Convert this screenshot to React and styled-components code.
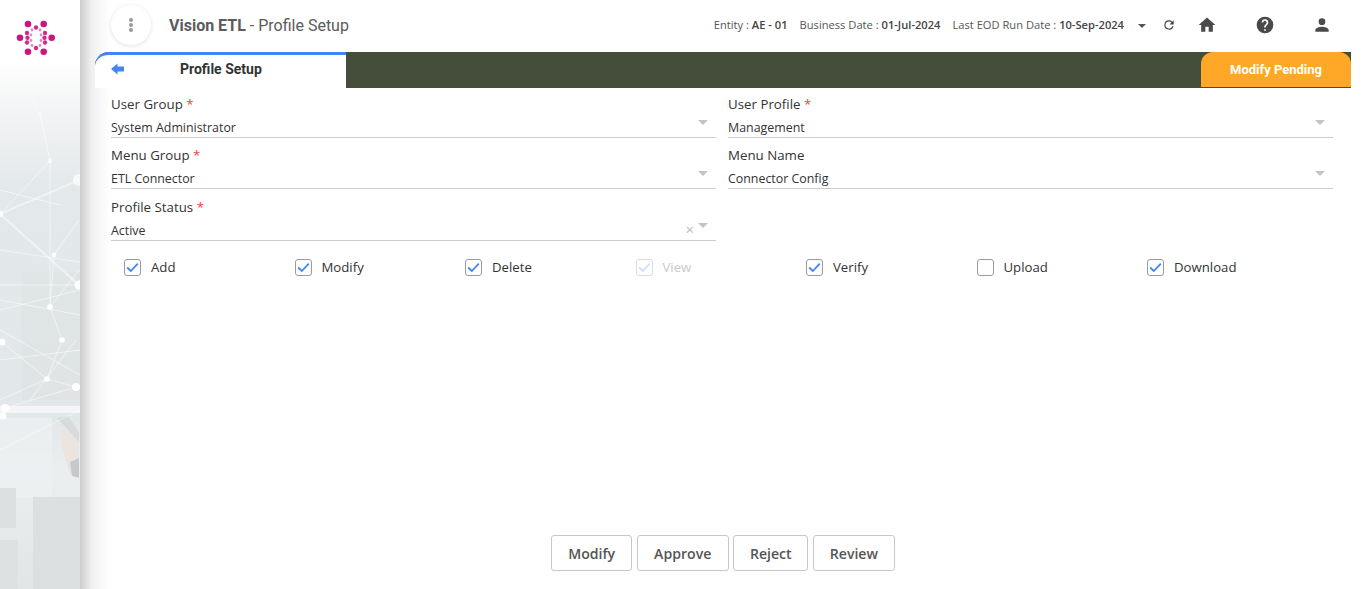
import React from "react";
import styled, { createGlobalStyle } from "styled-components";

const Global = createGlobalStyle`
  html, body { margin: 0; padding: 0; height: 100%; background: #fff; overflow: hidden; }
  #root { height: 589px; }
  * { box-sizing: border-box; }
`;
const Page = styled.div`display: flex; width: 1366px; height: 589px; font-family: "Open Sans", sans-serif; color: #333; background: #fff;`;
const Sidebar = styled.aside`
  position: relative; flex: 0 0 80px; height: 100%; overflow: visible;
  background: linear-gradient(180deg, #fff 0, #fff 60px, #f3f4f5 110px, #e3e8ea 190px, #e2e7e9 420px, #eceff0 470px, #e2e5e6 589px);
  &::after { content: ""; position: absolute; top: 0; bottom: 0; left: 80px; width: 30px; background: linear-gradient(90deg, rgba(0,0,0,.2), rgba(0,0,0,.06) 40%, rgba(0,0,0,0)); }
`;
const SideArt = styled.svg`display: block; width: 80px; height: 589px;`;
const Main = styled.main`position: relative; z-index: 1; flex: 1; min-width: 0; display: flex; flex-direction: column; padding: 0 15px; height: 100%;`;
const Header = styled.header`height: 52px; display: flex; align-items: center; padding-left: 16px;`;
const Kebab = styled.div`width: 40px; height: 40px; margin-top: -2px; border-radius: 50%; background: #fff; box-shadow: 0 1px 4px rgba(0,0,0,.12); display: flex; flex-direction: column; align-items: center; justify-content: center; gap: 1px; margin-right: 18px;`;
const Dot = styled.i`width: 4px; height: 4px; border-radius: 50%; background: #999;`;
const Title = styled.div`font-family: Roboto, sans-serif; font-size: 16px; color: #5b5b5b; margin-top: -2px; b { font-weight: 700; }`;
const Info = styled.div`margin-left: auto; display: flex; align-items: center; font-size: 11.15px; color: #555; margin-top: -3px; span { white-space: nowrap; } b { font-weight: 600; color: #444; }`;
const InfoItem = styled.span`margin-left: ${p => p.$ml || 0}px;`;
const Caret = styled.i`width: 0; height: 0; border: 4px solid transparent; border-top: 4px solid #555; border-bottom: 0; margin: 2px 0 0 14px;`;
const IconSlot = styled.span`display: flex; margin-left: ${p => p.$ml}px; margin-top: 1px; color: #4a4a4a;`;
const TabBar = styled.div`height: 36px; display: flex; background: #454d3b; border-top-left-radius: 14px; justify-content: space-between; align-items: stretch;`;
const Tab = styled.div`position: relative; width: 251px; background: #fff; border-top: 3px solid #4285f4; border-top-left-radius: 14px; display: flex; align-items: center; padding-left: 85px; font-family: Roboto, sans-serif; font-weight: 700; font-size: 14px; color: #333; padding-bottom: 6px;`;
const Back = styled.svg`position: absolute; left: 16px; top: 8px;`;
const Pending = styled.div`width: 150px; height: 35px; background: #ffa726; border-radius: 12px 12px 0 0; display: flex; align-items: center; justify-content: center; color: #fff; font-family: Roboto, sans-serif; font-weight: 700; font-size: 13px;`;
const Form = styled.div`display: grid; grid-template-columns: 605px 605px; column-gap: 12px; padding: 6.6px 0 0 16px;`;
const Field = styled.div`position: relative; height: 51.5px;`;
const Label = styled.div`font-size: 13.3px; font-weight: 500; color: #333; line-height: 18px; em { color: #f44336; font-style: normal; }`;
const Value = styled.div`margin-top: 7px; height: 18px; line-height: 16px; font-size: 12.4px; color: #333; border-bottom: 1px solid #ccc; padding-bottom: 2px; position: relative;`;
const Arrow = styled.i`position: absolute; right: 8px; top: 0; width: 0; height: 0; border: 5px solid transparent; border-top: 5px solid #c4c4c4; border-bottom: 0;`;
const Clear = styled.span`position: absolute; right: 22px; top: -2px; font-size: 15px; color: #bbb;`;
const Checks = styled.div`display: grid; grid-template-columns: repeat(7, 170.5px); padding: 0 0 0 29px; margin-top: 7px; height: 22px; align-items: center;`;
const Check = styled.label`display: flex; align-items: center; gap: 10px; font-size: 13.2px; font-weight: 500; color: ${p => p.$disabled ? "#c9c9c9" : "#333"};`;
const Box = styled.span`width: 17px; height: 17px; border: 1px solid ${p => p.$disabled ? "#ddd" : "#9a9aa5"}; border-radius: 3px; display: flex; align-items: center; justify-content: center; background: #fff;`;
const Actions = styled.div`margin-top: auto; margin-bottom: 18px; display: flex; justify-content: center; gap: 4.6px;`;
const Btn = styled.button`height: 36px; width: ${p => p.$w}px; background: #fff; border: 1px solid #c8c8c8; border-radius: 3px; color: #555; font-family: "Open Sans", sans-serif; font-size: 14.1px; font-weight: 600; padding: 0;`;

const tick = c => <svg width="13" height="11" viewBox="0 0 13 11"><path d="M1.2 5.5 L4.8 9 L11.8 1.6" fill="none" stroke={c} strokeWidth="1.8" /></svg>;

const outer = [[28, 24], [43.7, 24], [20, 37.7], [51.7, 37.7], [28, 51.7], [43.7, 51.7]];
const middle = [[36, 27.5], [36, 48], [27, 33], [45, 33], [27, 42.5], [45, 42.5], [27.5, 37.7], [44.5, 37.7]];
const light = [[32, 30], [40, 30], [31, 35], [41, 35], [31, 40.5], [41, 40.5], [32, 45.5], [40, 45.5]];
const Logo = () => (
  <>
    {outer.map((p, i) => <circle key={"o" + i} cx={p[0]} cy={p[1]} r="3.3" fill="#c9177f" />)}
    {middle.map((p, i) => <circle key={"m" + i} cx={p[0]} cy={p[1]} r="2.2" fill="#d02c8d" />)}
    {light.map((p, i) => <circle key={"l" + i} cx={p[0]} cy={p[1]} r="1.4" fill="#e487bf" />)}
  </>
);

const thick = [[0,214,79,180],[0,214,79,285]];
const links = [[27,90,40,114],[40,114,50,161],[50,161,50,307],[50,161,0,214],[54,255,50,307],[50,307,79,270],[50,307,62,340],[62,340,47,379],[47,379,76,387],[47,379,2,342],[76,387,5,408],[54,255,79,220],[0,285,79,285],[0,300,80,315],[0,360,80,350],[0,330,80,375],[30,400,76,340],[0,310,80,290],[0,400,47,379],[0,250,80,262],[0,450,80,410],[0,190,60,205]];
const nodes = [[40,114,1.6,.4],[50,161,2.4,.6],[79,180,6,.7],[0,214,3,.9],[54,255,2.4,.95],[79,285,4.5,.95],[50,307,2.8,1],[62,340,2.8,1],[2,342,3.5,1],[47,379,2.8,1],[76,387,4,1],[5,408,4,1],[3,416,3.5,1]];

const Art = () => (
  <SideArt viewBox="0 0 80 589">
    <Logo />
    <rect x="22" y="272" width="58" height="128" fill="#d9dedf" opacity=".3" />
    <rect x="0" y="418" width="52" height="80" fill="#eef1f2" opacity=".7" />
    <rect x="33" y="497" width="47" height="92" fill="#dcdfe0" />
    <rect x="0" y="488" width="16" height="40" fill="#dcdfe0" />
    <rect x="0" y="540" width="18" height="49" fill="#dee1e2" />
    <path d="M60 428 L79 436 L79 468 L70 474 L62 448 Z" fill="#ece5df" />
    <path d="M57 418 L68 416 L79 432 L79 442 Z" fill="#d8dbdc" />
    <path d="M70 462 L79 458 L79 478 L72 476 Z" fill="#c6c9cb" />
    {thick.map((l, i) => <line key={"t" + i} x1={l[0]} y1={l[1]} x2={l[2]} y2={l[3]} stroke="#eef4f6" strokeWidth="2" />)}
    {links.map((l, i) => <line key={i} x1={l[0]} y1={l[1]} x2={l[2]} y2={l[3]} stroke="#fff" strokeWidth=".8" opacity=".7" />)}
    <rect x="0" y="406" width="80" height="7" fill="#fff" opacity=".6" />
    {nodes.map((n, i) => <circle key={i} cx={n[0]} cy={n[1]} r={n[2]} fill="#fff" opacity={n[3]} />)}
  </SideArt>
);

const fields = [
  ["User Group", true, "System Administrator"],
  ["User Profile", true, "Management"],
  ["Menu Group", true, "ETL Connector"],
  ["Menu Name", false, "Connector Config"],
  ["Profile Status", true, "Active", true],
];
const checks = [["Add", 1], ["Modify", 1], ["Delete", 1], ["View", 1, true], ["Verify", 1], ["Upload", 0], ["Download", 1]];

export default function App() {
  return (
    <Page>
      <Global />
      <Sidebar><Art /></Sidebar>
      <Main>
        <Header>
          <Kebab><Dot /><Dot /><Dot /></Kebab>
          <Title><b>Vision ETL</b> - Profile Setup</Title>
          <Info>
            <InfoItem>Entity : <b>AE - 01</b></InfoItem>
            <InfoItem $ml={12}>Business Date : <b>01-Jul-2024</b></InfoItem>
            <InfoItem $ml={12}>Last EOD Run Date : <b>10-Sep-2024</b></InfoItem>
            <Caret />
            <IconSlot $ml={16}><svg width="14" height="14" viewBox="0 0 24 24" fill="#444"><path d="M17.65 6.35A7.95 7.95 0 0 0 12 4a8 8 0 1 0 7.73 10h-2.08A6 6 0 1 1 12 6c1.66 0 3.14.69 4.22 1.78L13 11h7V4z" /></svg></IconSlot>
            <IconSlot $ml={21}><svg width="20" height="20" viewBox="0 0 24 24" fill="#4a4a4a"><path d="M10 20v-6h4v6h5v-8h3L12 3 2 12h3v8z" /></svg></IconSlot>
            <IconSlot $ml={38}><svg width="20" height="20" viewBox="0 0 24 24" fill="#4a4a4a"><path d="M12 2a10 10 0 1 0 0 20 10 10 0 0 0 0-20zm1 17h-2v-2h2v2zm2.07-7.75-.9.92C13.45 12.9 13 13.5 13 15h-2v-.5c0-1.1.45-2.1 1.17-2.83l1.24-1.26A2 2 0 1 0 10 9H8a4 4 0 1 1 8 0c0 .88-.36 1.68-.93 2.25z" /></svg></IconSlot>
            <IconSlot $ml={37}><svg width="20" height="20" viewBox="0 0 24 24" fill="#4a4a4a"><path d="M12 12a4 4 0 1 0 0-8 4 4 0 0 0 0 8zm0 2c-2.67 0-8 1.34-8 4v2h16v-2c0-2.66-5.33-4-8-4z" /></svg></IconSlot>
            <IconSlot $ml={19} />
          </Info>
        </Header>
        <TabBar>
          <Tab>
            <Back width="14" height="12" viewBox="0 0 14 12"><path d="M0 6 L6.5 0.5 V3.5 H13 V8.5 H6.5 V11.5 Z" fill="#4285f4" /></Back>
            Profile Setup
          </Tab>
          <Pending>Modify Pending</Pending>
        </TabBar>
        <Form>
          {fields.map(f => (
            <Field key={f[0]}>
              <Label>{f[0]}{f[1] && <em> *</em>}</Label>
              <Value>
                {f[2]}
                {f[3] && <Clear>×</Clear>}
                <Arrow />
              </Value>
            </Field>
          ))}
        </Form>
        <Checks>
          {checks.map(c => (
            <Check key={c[0]} $disabled={c[2]}>
              <Box $disabled={c[2]}>{c[1] ? tick(c[2] ? "#cfe0fb" : "#4285f4") : null}</Box>
              {c[0]}
            </Check>
          ))}
        </Checks>
        <Actions>
          <Btn $w={81}>Modify</Btn>
          <Btn $w={92}>Approve</Btn>
          <Btn $w={75}>Reject</Btn>
          <Btn $w={82}>Review</Btn>
        </Actions>
      </Main>
    </Page>
  );
}
